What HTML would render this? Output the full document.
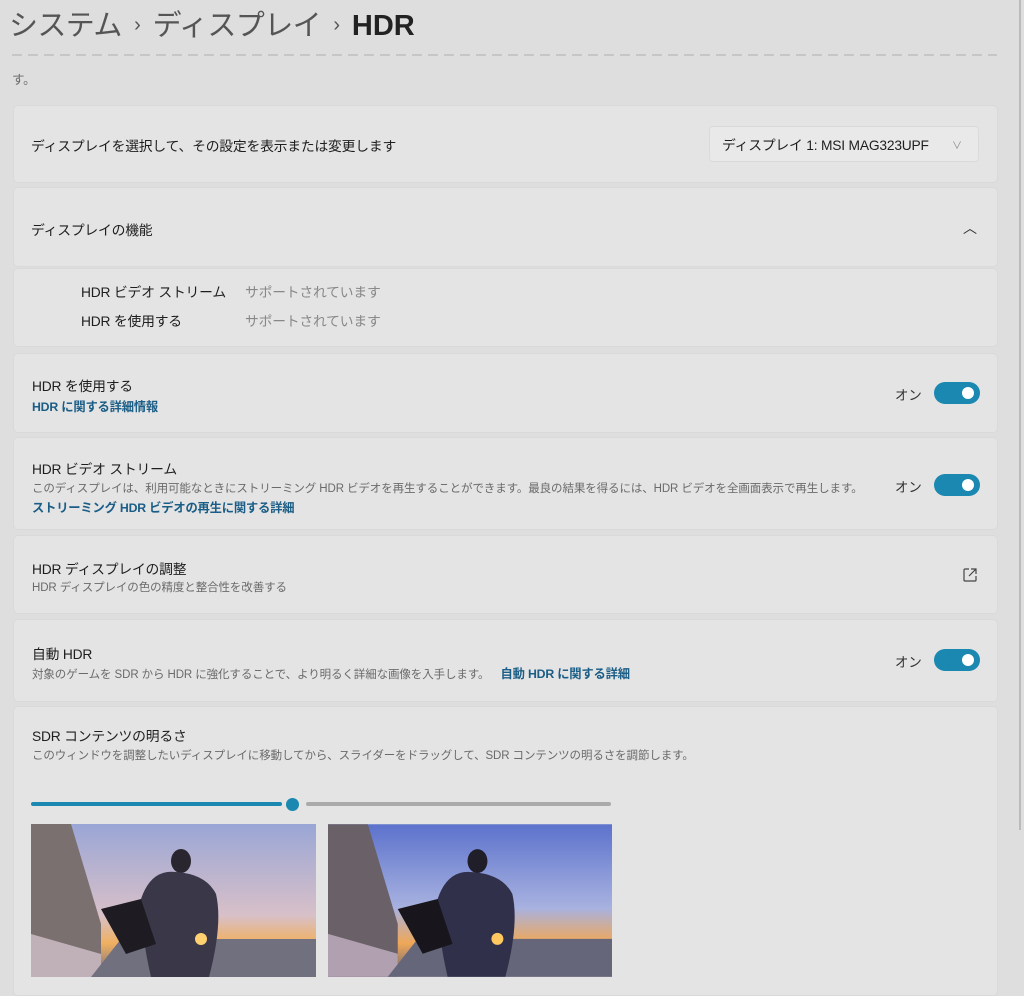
<!DOCTYPE html>
<html><head><meta charset="utf-8"><style>
body{margin:0;width:1024px;height:977px;overflow:hidden;background:#dedede;font-family:"Liberation Sans","Noto Sans CJK JP",sans-serif;color:#1b1b1b;position:relative}
.a{position:absolute;white-space:nowrap}
.card{position:absolute;left:13px;width:985px;background:#e4e4e4;border:1px solid #d9d9d9;border-radius:5px;box-sizing:border-box}
.t{font-size:13.8px;color:#1e1e1e;letter-spacing:-0.2px}
.s{font-size:11.5px;color:#6a6a6a;letter-spacing:-0.1px}
.l{font-size:12.3px;color:#1a5d86;font-weight:bold;letter-spacing:-0.2px}
.tog{position:absolute;left:934px;width:46px;height:22px;border-radius:11px;background:#1a88b0}
.tog:after{content:"";position:absolute;right:6px;top:5px;width:12px;height:12px;border-radius:6px;background:#fff}
.on{position:absolute;left:895px;font-size:13.4px;color:#333}
</style></head><body>
<div class="a" style="left:9px;top:2px;font-size:29px;color:#555;letter-spacing:-0.6px">システム <span style="font-size:20px;vertical-align:4px">&nbsp;›&nbsp;</span> ディスプレイ <span style="font-size:20px;vertical-align:4px">&nbsp;›&nbsp;</span> <span style="color:#222;font-weight:bold;font-size:29px;letter-spacing:0">HDR</span></div>
<div class="a" style="left:12px;top:54px;height:2px;width:985px;background:repeating-linear-gradient(90deg,#c6c6c6 0 10px,transparent 10px 16px)"></div>
<div class="a s" style="left:12px;top:69px;font-size:12.5px">す。</div>
<div class="a" style="left:1019px;top:0;width:2px;height:830px;background:#bbb"></div>

<div class="card" style="top:105px;height:78px"></div>
<div class="a t" style="left:31px;top:135px">ディスプレイを選択して、その設定を表示または変更します</div>
<div class="a" style="left:709px;top:126px;width:270px;height:36px;background:#e9e9e9;border:1px solid #dadada;border-radius:4px;box-sizing:border-box"></div>
<div class="a t" style="left:722px;top:134px">ディスプレイ 1: MSI MAG323UPF</div>
<div class="a" style="left:952px;top:137px;font-size:10px;color:#888">∨</div>

<div class="card" style="top:187px;height:80px"></div>
<div class="a t" style="left:31px;top:219px">ディスプレイの機能</div>
<div class="a" style="left:963px;top:218px;font-size:14px;color:#333">︿</div>
<div class="card" style="top:268px;height:79px"></div>
<div class="a t" style="left:81px;top:281px">HDR ビデオ ストリーム</div>
<div class="a t" style="left:245px;top:281px;color:#888">サポートされています</div>
<div class="a t" style="left:81px;top:310px">HDR を使用する</div>
<div class="a t" style="left:245px;top:310px;color:#888">サポートされています</div>

<div class="card" style="top:353px;height:80px"></div>
<div class="a t" style="left:32px;top:375px">HDR を使用する</div>
<div class="a l" style="left:32px;top:397px">HDR に関する詳細情報</div>
<div class="on" style="top:384px">オン</div><div class="tog" style="top:382px"></div>

<div class="card" style="top:437px;height:93px"></div>
<div class="a t" style="left:32px;top:458px">HDR ビデオ ストリーム</div>
<div class="a s" style="left:32px;top:480px">このディスプレイは、利用可能なときにストリーミング HDR ビデオを再生することができます。最良の結果を得るには、HDR ビデオを全画面表示で再生します。</div>
<div class="a l" style="left:32px;top:498px">ストリーミング HDR ビデオの再生に関する詳細</div>
<div class="on" style="top:476px">オン</div><div class="tog" style="top:474px"></div>

<div class="card" style="top:535px;height:79px"></div>
<div class="a t" style="left:32px;top:558px">HDR ディスプレイの調整</div>
<div class="a s" style="left:32px;top:579px">HDR ディスプレイの色の精度と整合性を改善する</div>
<svg class="a" style="left:962px;top:567px" width="16" height="16" viewBox="0 0 16 16" fill="none" stroke="#444" stroke-width="1.2"><path d="M7 2H3a1 1 0 0 0-1 1v10a1 1 0 0 0 1 1h10a1 1 0 0 0 1-1V9"/><path d="M9 2h5v5M14 2L7 9"/></svg>

<div class="card" style="top:619px;height:83px"></div>
<div class="a t" style="left:32px;top:643px">自動 HDR</div>
<div class="a s" style="left:32px;top:664px">対象のゲームを SDR から HDR に強化することで、より明るく詳細な画像を入手します。 <span class="l" style="margin-left:8px">自動 HDR に関する詳細</span></div>
<div class="on" style="top:651px">オン</div><div class="tog" style="top:649px"></div>

<div class="card" style="top:706px;height:290px"></div>
<div class="a t" style="left:32px;top:725px">SDR コンテンツの明るさ</div>
<div class="a s" style="left:32px;top:747px">このウィンドウを調整したいディスプレイに移動してから、スライダーをドラッグして、SDR コンテンツの明るさを調節します。</div>
<div class="a" style="left:31px;top:802px;width:251px;height:4px;border-radius:2px;background:#1a88b0"></div>
<div class="a" style="left:306px;top:802px;width:305px;height:4px;border-radius:2px;background:#aaa"></div>
<div class="a" style="left:286px;top:798px;width:13px;height:13px;border-radius:7px;background:#1a88b0"></div>

<svg class="a" style="left:31px;top:824px" width="285" height="153" viewBox="0 0 285 153">
<defs><linearGradient id="g1" x1="0" y1="0" x2="0" y2="1"><stop offset="0" stop-color="#9aa6d6"/><stop offset=".6" stop-color="#d8c0c8"/><stop offset=".78" stop-color="#f0b060"/><stop offset="1" stop-color="#6a6a80"/></linearGradient></defs>
<rect width="285" height="153" fill="url(#g1)"/>
<path d="M0 0H40L70 100V153H0Z" fill="#7a7070"/>
<path d="M0 110L70 130V153H0Z" fill="#c0b0b8"/>
<path d="M60 153L90 115H285V153Z" fill="#70707e"/>
<ellipse cx="150" cy="37" rx="10" ry="12" fill="#2a2630"/>
<path d="M110 75Q120 45 145 48Q175 50 185 70Q192 100 178 153H120Q110 110 110 75Z" fill="#3a3848"/>
<path d="M70 85L110 75L125 120L95 130Z" fill="#1e1c22"/>
<circle cx="170" cy="115" r="6" fill="#ffd070"/>
</svg>
<svg class="a" style="left:328px;top:824px" width="284" height="153" viewBox="0 0 285 153">
<defs><linearGradient id="g2" x1="0" y1="0" x2="0" y2="1"><stop offset="0" stop-color="#5c72cc"/><stop offset=".55" stop-color="#a8b2e0"/><stop offset=".78" stop-color="#f0a858"/><stop offset="1" stop-color="#606078"/></linearGradient></defs>
<rect width="285" height="153" fill="url(#g2)"/>
<path d="M0 0H40L70 100V153H0Z" fill="#6a6068"/>
<path d="M0 110L70 130V153H0Z" fill="#b0a0b0"/>
<path d="M60 153L90 115H285V153Z" fill="#66667a"/>
<ellipse cx="150" cy="37" rx="10" ry="12" fill="#201e28"/>
<path d="M110 75Q120 45 145 48Q175 50 185 70Q192 100 178 153H120Q110 110 110 75Z" fill="#30304a"/>
<path d="M70 85L110 75L125 120L95 130Z" fill="#18161c"/>
<circle cx="170" cy="115" r="6" fill="#ffc860"/>
</svg>
</body></html>
